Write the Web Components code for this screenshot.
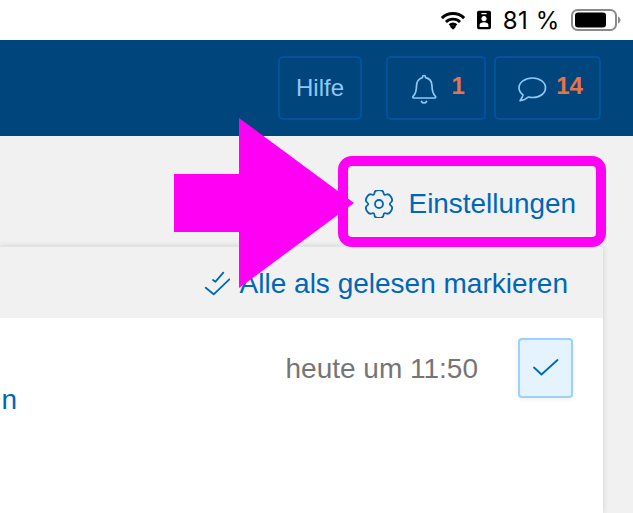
<!DOCTYPE html>
<html lang="de"><head><meta charset="utf-8"><title>Einstellungen</title>
<style>
html,body{margin:0;padding:0;height:513px;overflow:hidden;background:#f1f1f1;font-family:"Liberation Sans",Arial,sans-serif}
</style></head><body>
<app-shell></app-shell>
<script>
const def=(name,css,html)=>customElements.define(name,class extends HTMLElement{constructor(){super();this.attachShadow({mode:'open'}).innerHTML=`<style>${css}</style>${html}`}});
const gear=(()=>{const pts=[];for(let i=0;i<6;i++){const a=(i*60-90)*Math.PI/180,o=17*Math.PI/180,v=30*Math.PI/180;
for(const [d,r] of [[-o,14.6],[o,14.6],[v,9.6]])pts.push([14+r*Math.cos(a+d),14+r*Math.sin(a+d)]);}
const mid=(p,q)=>[(p[0]+q[0])/2,(p[1]+q[1])/2],f=p=>p.map(n=>n.toFixed(2)).join(' ');
let s='M'+f(mid(pts[pts.length-1],pts[0]));pts.forEach((p,i)=>{s+='Q'+f(p)+' '+f(mid(p,pts[(i+1)%pts.length]))});return s+'z'})();
def('status-bar',`:host{display:flex;height:40px;background:#fff;align-items:center;justify-content:flex-end;color:#000;font:24px Inter,"Liberation Sans",sans-serif;box-sizing:border-box;padding-right:12px}
.w{margin-right:11px}.p{margin-right:12px}.t{margin-right:11px;letter-spacing:.6px}svg{display:block}`,
`<svg class="w" width="26" height="20" viewBox="0 0 28 21"><path d="M2 8.500a17 17 0 0 1 24 0M6.400 12.600a11 11 0 0 1 15.200 0M10.400 16.300a5.400 5.400 0 0 1 7.200 0" fill="none" stroke="#000" stroke-width="3.200"/><path d="M14 21l-3.200-3.200a4.600 4.600 0 0 1 6.400 0z" fill="#000"/></svg>
<svg class="p" width="14" height="20" viewBox="0 0 16 21"><path fill-rule="evenodd" d="M2 0h12a2 2 0 0 1 2 2v17a2 2 0 0 1-2 2H2a2 2 0 0 1-2-2V2a2 2 0 0 1 2-2zM5 2.500v1.500h6V2.500zM8 6a3 3 0 1 0 .01 0zM3 16v2.500h10V16c0-2-2-3-5-3s-5 1-5 3z" fill="#000"/></svg>
<span class="t">81 %</span>
<svg width="50" height="24" viewBox="0 0 50 24"><rect x="1" y="2" width="44" height="20" rx="5.500" fill="none" stroke="#8a8a8a" stroke-width="2"/><rect x="4" y="4.500" width="31" height="15" rx="3" fill="#000"/><path d="M47 8.500c1.500.5 2.500 2 2.500 3.500s-1 3-2.500 3.500z" fill="#8a8a8a"/></svg>`);
def('top-btn',`:host{display:flex;box-sizing:border-box;height:64px;border:2.500px solid #00539c;border-radius:5px;align-items:center;justify-content:center;gap:var(--gap,0);padding-left:var(--pl,0);color:#8fc8f5;font-size:24px}`,`<slot></slot>`);
def('count-num',`:host{color:#e8734a;font-weight:700;font-size:24px;position:relative;top:-2px}`,`<slot></slot>`);
def('app-header',`:host{display:flex;height:96px;background:#00457c;align-items:center;justify-content:flex-end;padding-right:32px}
.h{width:84px}.a{width:100px;margin-left:24px}.c{width:107px;margin-left:8px}svg{display:block;margin-top:2px;fill:none;stroke:#8fc8f5;stroke-width:1.700;stroke-linecap:round;stroke-linejoin:round}`,
`<top-btn class="h">Hilfe</top-btn>
<top-btn class="a" style="--gap:14.500px;--pl:3.700px"><svg width="26" height="30" viewBox="0 0 26 30"><path d="M13 1.500c.8 0 1.500.7 1.500 1.500v.6c4 .8 6.500 4.200 6.500 8.400 0 5 1 8 3.500 10.500.6.600.2 1.500-.6 1.500H2.600c-.8 0-1.200-.9-.6-1.500C4.500 20 5.500 17 5.500 12c0-4.200 2.500-7.600 6-8.400V3c0-.8.700-1.500 1.500-1.500zM10.500 27.500c.5 1 1.400 1.500 2.500 1.500s2-.5 2.500-1.500"/></svg><count-num>1</count-num></top-btn>
<top-btn class="c" style="--gap:9.500px;--pl:4.700px"><svg width="30" height="27" viewBox="0 0 30 27"><path d="M15.500 2C23 2 28.500 6.300 28.500 11.800S23 21.500 15.500 21.500c-1.500 0-3-.2-4.300-.5-1.800 1.800-4.700 3.500-8.200 3.700 1.400-1.600 2.600-3.500 3-5.800C3.800 17.200 2 14.700 2 11.800 2 6.300 8 2 15.500 2z"/></svg><count-num>14</count-num></top-btn>`);
def('settings-bar',`:host{display:flex;height:110px;justify-content:flex-end;align-items:center;padding:26px 57px 0 0;box-sizing:border-box;color:#0067b8;font-size:27.900px;gap:16px}
svg{display:block;fill:none;stroke:#0067b8;stroke-width:1.800;stroke-linejoin:round}`,
`<svg width="28" height="28" viewBox="0 0 28 28"><path d="${gear}"/><circle cx="14" cy="14" r="4"/></svg><span>Einstellungen</span>`);
def('card-head',`:host{display:flex;height:72px;background:#f1f1f1;justify-content:flex-end;align-items:center;gap:10px;padding:2px 35px 0 0;color:#0067b8;font-size:28px;border-top:1px solid #e3e3e3;box-sizing:border-box}
svg{display:block;fill:none;stroke:#0067b8;stroke-width:1.800;stroke-linecap:round;stroke-linejoin:round}`,
`<svg width="26" height="26" viewBox="0 0 26 26"><path d="M1.700 16.700L9.700 23.300 25.300 8.300M9 9L11.500 10.700 19.300 1.700"/></svg><span>Alle als gelesen markieren</span>`);
def('check-box',`:host{display:flex;box-sizing:border-box;width:55px;height:60px;background:#e5f3ff;border:2px solid #9bd0ff;border-radius:4px;align-items:center;justify-content:center;box-shadow:0 1px 4px rgba(0,0,0,.08)}
svg{display:block;fill:none;stroke:#0067b8;stroke-width:1.800;stroke-linecap:round;stroke-linejoin:round}`,
`<svg width="26" height="18" viewBox="0 0 26 18"><path d="M1 8.500L8.500 15.500 24.500 1"/></svg>`);
def('message-row',`:host{display:flex;position:relative;background:#fff;height:195px;justify-content:flex-end;padding:20px 30px 0 0;gap:40px;box-sizing:border-box}
.t{color:#757575;font-size:28px;line-height:1;margin-top:17px}.n{position:absolute;left:0;top:67px;color:#0067b8;font-size:28px;line-height:30px;width:17px;overflow:hidden;text-align:right}`,
`<span class="n">n</span><span class="t">heute um 11:50</span><check-box></check-box>`);
def('mail-card',`:host{display:block;margin-right:30px;box-shadow:0 0 6px rgba(0,0,0,.14)}`,`<card-head></card-head><message-row></message-row>`);
def('callout-mark',`:host{position:absolute;left:0;top:0;width:633px;height:513px;pointer-events:none}
.box{position:absolute;left:338px;top:156px;width:268px;height:91px;box-sizing:border-box;border:10px solid #ff00f5;border-radius:14px}
svg{position:absolute;left:0;top:0}`,
`<div class="box"></div><svg width="633" height="513"><path d="M174 174H239V118L354 203 239 288V232H174z" fill="#ff00f5"/></svg>`);
def('app-shell',`:host{display:block;position:relative;width:633px;height:513px;overflow:hidden;background:#f1f1f1}`,
`<status-bar></status-bar><app-header></app-header><settings-bar></settings-bar><mail-card></mail-card><callout-mark></callout-mark>`);
</script>
</body></html>
